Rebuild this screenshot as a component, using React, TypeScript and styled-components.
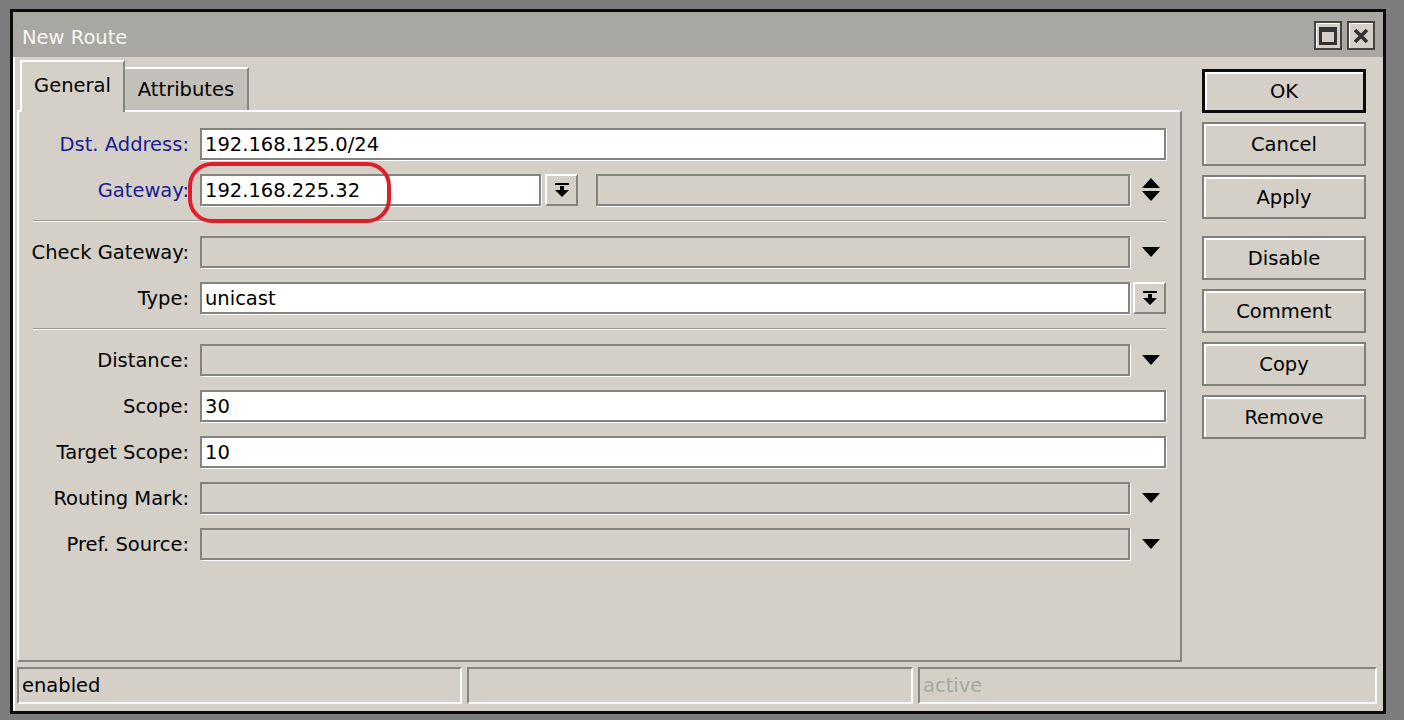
import React from 'react';
import styled, { createGlobalStyle } from 'styled-components';

const GlobalStyle = createGlobalStyle`
  html, body { margin: 0; padding: 0; background: #7c7c7c; }
  body { font-family: "DejaVu Sans", "Liberation Sans", sans-serif; font-size: 19.5px; color: #000; }
  * { box-sizing: border-box; }
`;

const Screen = styled.div`
  width: 1404px;
  height: 720px;
  padding: 9px 0 0 10px;
  background: #7c7c7c;
  overflow: hidden;
`;

const Window = styled.div`
  width: 1376px;
  height: 705px;
  border: 3px solid #0b0b0b;
  display: flex;
  flex-direction: column;
  background: #d4d0c8;
`;

const TitleBar = styled.div`
  height: 45px;
  flex: none;
  background: #a8a7a2;
  display: flex;
  align-items: center;
  justify-content: space-between;
  padding: 0 8px 0 9px;
`;

const Title = styled.span`
  color: #f6f6f4;
  padding-top: 6px;
`;

const TitleButtons = styled.div`
  display: flex;
  gap: 5px;
  padding-top: 2px;
`;

const TitleButton = styled.div`
  width: 28px;
  height: 29px;
  border: 2px solid #45433e;
  background: #d4d0c8;
  box-shadow: inset 1px 1px 0 #fbfbfb;
  display: flex;
  align-items: center;
  justify-content: center;
`;

const Body = styled.div`
  flex: 1;
  display: flex;
  flex-direction: column;
  box-shadow: inset 2px 0 0 #fff;
`;

const Main = styled.div`
  flex: 1;
  display: flex;
  gap: 20px;
  padding: 3px 0 0 4px;
`;

const LeftColumn = styled.div`
  width: 1165px;
  display: flex;
  flex-direction: column;
`;

const TabRow = styled.div`
  display: flex;
  align-items: flex-end;
  height: 50px;
  padding-left: 3px;
`;

const Tab = styled.div<{ $active?: boolean; $width: number }>`
  width: ${(p) => p.$width}px;
  height: ${(p) => (p.$active ? 52 : 43)}px;
  margin-bottom: ${(p) => (p.$active ? -2 : 0)}px;
  position: relative;
  z-index: ${(p) => (p.$active ? 2 : 1)};
  background: ${(p) => (p.$active ? '#d4d0c8' : '#c3c0b9')};
  border-top: 2px solid #fff;
  border-left: ${(p) => (p.$active ? '2px solid #fff' : 'none')};
  border-right: 2px solid #87857f;
  display: flex;
  align-items: center;
  justify-content: center;
  padding-bottom: ${(p) => (p.$active ? 4 : 0)}px;
`;

const Panel = styled.div`
  flex: 1;
  position: relative;
  border: 2px solid;
  border-color: #fff #87857f #87857f #fff;
  padding: 16px 14px 0 0;
  display: flex;
  flex-direction: column;
  gap: 14px;
`;

const FormRow = styled.div`
  display: grid;
  grid-template-columns: 170px 1fr;
  column-gap: 11px;
  align-items: center;
  height: 32px;
`;

const Label = styled.div<{ $blue?: boolean }>`
  text-align: right;
  white-space: nowrap;
  color: ${(p) => (p.$blue ? '#1c1c92' : '#000')};
`;

const FieldLine = styled.div`
  display: flex;
  align-items: center;
  height: 32px;
`;

const TextBox = styled.div<{ $disabled?: boolean; $width?: number; $ml?: number }>`
  height: 32px;
  ${(p) => (p.$width ? `width: ${p.$width}px; flex: none;` : 'flex: 1;')}
  margin-left: ${(p) => p.$ml ?? 0}px;
  border: 2px solid #85837e;
  box-shadow: 1px 1px 0 #fff;
  background: ${(p) => (p.$disabled ? '#d4d0c8' : '#fff')};
  padding-left: 3px;
  display: flex;
  align-items: center;
  white-space: nowrap;
`;

const DropButton = styled.div<{ $ml: number }>`
  width: 33px;
  height: 32px;
  flex: none;
  margin-left: ${(p) => p.$ml}px;
  border: 2px solid;
  border-color: #fff #85837e #85837e #fff;
  background: #d4d0c8;
  display: flex;
  align-items: center;
  justify-content: center;
`;

const Trailing = styled.div`
  width: 36px;
  flex: none;
  display: flex;
  align-items: center;
  padding-left: 12px;
`;

const Separator = styled.div`
  height: 2px;
  margin-left: 14px;
  border-top: 1px solid #9a978f;
  border-bottom: 1px solid #fff;
`;

const Annotation = styled.div`
  position: absolute;
  left: 169px;
  top: 50px;
  width: 203px;
  height: 61px;
  border: 4px solid #dc1f2a;
  border-radius: 24px;
  pointer-events: none;
`;

const SideColumn = styled.div`
  width: 164px;
  display: flex;
  flex-direction: column;
  gap: 9px;
  padding-top: 9px;
`;

const SideButton = styled.div<{ $default?: boolean; $groupStart?: boolean }>`
  height: 44px;
  margin-top: ${(p) => (p.$groupStart ? 8 : 0)}px;
  border: ${(p) => (p.$default ? '3px solid #0c0c0c' : '2px solid #807e79')};
  box-shadow: inset 2px 2px 0 #fff;
  background: #d4d0c8;
  display: flex;
  align-items: center;
  justify-content: center;
`;

const StatusBar = styled.div`
  flex: none;
  height: 49px;
  display: flex;
  gap: 5px;
  padding: 5px 6px 7px 4px;
`;

const StatusCell = styled.div<{ $width?: number; $muted?: boolean }>`
  ${(p) => (p.$width ? `width: ${p.$width}px; flex: none;` : 'flex: 1;')}
  border: 2px solid;
  border-color: #87857f #fbfbfb #fbfbfb #87857f;
  padding-left: 3px;
  display: flex;
  align-items: center;
  color: ${(p) => (p.$muted ? '#a9a7a2' : '#000')};
`;

const TriangleDown = () => (
  <svg width="18" height="10" viewBox="0 0 18 10">
    <polygon points="0,0 18,0 9,10" fill="#000" />
  </svg>
);

const UpDown = () => (
  <svg width="18" height="24" viewBox="0 0 18 24">
    <polygon points="9,0 18,10 0,10" fill="#000" />
    <polygon points="0,13 18,13 9,23" fill="#000" />
  </svg>
);

const DropIcon = () => (
  <svg width="14" height="14" viewBox="0 0 14 14">
    <rect x="0" y="0" width="14" height="2" fill="#000" />
    <rect x="5" y="3" width="4" height="4" fill="#000" />
    <polygon points="0,7 14,7 7,14" fill="#000" />
  </svg>
);

const MaxIcon = () => (
  <svg width="18" height="18" viewBox="0 0 18 18">
    <rect x="1.5" y="1.5" width="15" height="15" fill="none" stroke="#333" strokeWidth="3" />
    <rect x="1" y="1" width="16" height="4" fill="#333" />
  </svg>
);

const CloseIcon = () => (
  <svg width="16" height="16" viewBox="0 0 16 16">
    <path d="M2 2 L14 14 M14 2 L2 14" stroke="#333" strokeWidth="3.6" />
  </svg>
);

type FieldKind = 'text' | 'disabled-drop' | 'text-drop';

const Field = ({ label, value, kind, blue }: { label: string; value?: string; kind: FieldKind; blue?: boolean }) => (
  <FormRow>
    <Label $blue={blue}>{label}</Label>
    <FieldLine>
      {kind === 'text' && <TextBox>{value}</TextBox>}
      {kind === 'disabled-drop' && (
        <>
          <TextBox $disabled />
          <Trailing>
            <TriangleDown />
          </Trailing>
        </>
      )}
      {kind === 'text-drop' && (
        <>
          <TextBox>{value}</TextBox>
          <DropButton $ml={3}>
            <DropIcon />
          </DropButton>
        </>
      )}
    </FieldLine>
  </FormRow>
);

export default function App() {
  return (
    <>
      <GlobalStyle />
      <Screen>
        <Window>
          <TitleBar>
            <Title>New Route</Title>
            <TitleButtons>
              <TitleButton>
                <MaxIcon />
              </TitleButton>
              <TitleButton>
                <CloseIcon />
              </TitleButton>
            </TitleButtons>
          </TitleBar>
          <Body>
            <Main>
              <LeftColumn>
                <TabRow>
                  <Tab $active $width={105}>General</Tab>
                  <Tab $width={124}>Attributes</Tab>
                </TabRow>
                <Panel>
                  <Field label="Dst. Address:" value="192.168.125.0/24" kind="text" blue />
                  <FormRow>
                    <Label $blue>Gateway:</Label>
                    <FieldLine>
                      <TextBox $width={341}>192.168.225.32</TextBox>
                      <DropButton $ml={4}>
                        <DropIcon />
                      </DropButton>
                      <TextBox $disabled $ml={18} />
                      <Trailing>
                        <UpDown />
                      </Trailing>
                    </FieldLine>
                  </FormRow>
                  <Separator />
                  <Field label="Check Gateway:" kind="disabled-drop" />
                  <Field label="Type:" value="unicast" kind="text-drop" />
                  <Separator />
                  <Field label="Distance:" kind="disabled-drop" />
                  <Field label="Scope:" value="30" kind="text" />
                  <Field label="Target Scope:" value="10" kind="text" />
                  <Field label="Routing Mark:" kind="disabled-drop" />
                  <Field label="Pref. Source:" kind="disabled-drop" />
                  <Annotation />
                </Panel>
              </LeftColumn>
              <SideColumn>
                <SideButton $default>OK</SideButton>
                <SideButton>Cancel</SideButton>
                <SideButton>Apply</SideButton>
                <SideButton $groupStart>Disable</SideButton>
                <SideButton>Comment</SideButton>
                <SideButton>Copy</SideButton>
                <SideButton>Remove</SideButton>
              </SideColumn>
            </Main>
            <StatusBar>
              <StatusCell $width={445}>enabled</StatusCell>
              <StatusCell $width={446} />
              <StatusCell $muted>active</StatusCell>
            </StatusBar>
          </Body>
        </Window>
      </Screen>
    </>
  );
}
